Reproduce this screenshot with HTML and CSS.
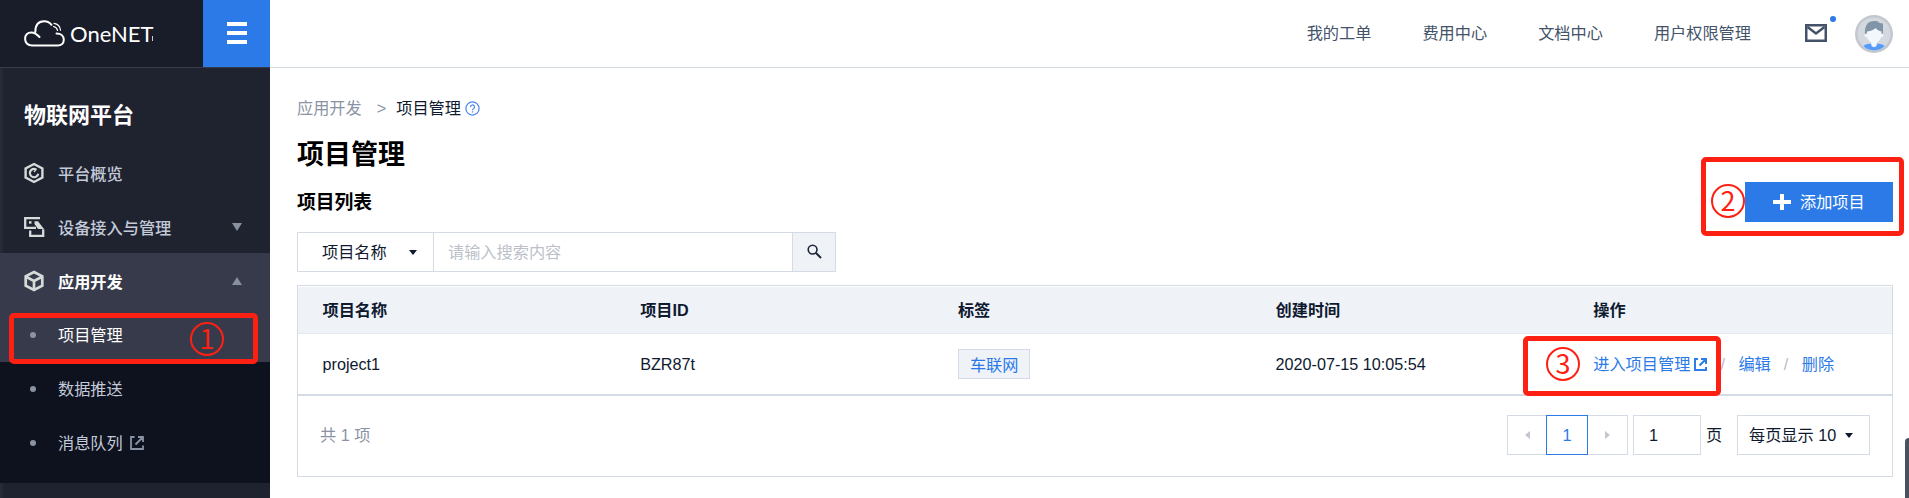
FILE: index.html
```html
<!DOCTYPE html>
<html lang="zh-CN">
<head>
<meta charset="utf-8">
<title>OneNET 项目管理</title>
<link rel="stylesheet" href="styles.css">
</head>
<body>
<header class="topbar">
  <div class="brand">
    <svg class="brand-cloud" width="42" height="28" viewBox="0 0 42 28" fill="none" stroke="#fff" stroke-width="2" stroke-linecap="round" stroke-linejoin="round">
      <path d="M32.500 13.500c4.500 0 7.300 2.600 7.300 6.200S37.200 25.400 33.800 25.400H8c-4 0-6.900-2.500-6.900-6.500 0-4.200 2.900-6.500 6.100-6.500 3.300 0 5.600 1.600 8.300 4.600"/>
      <path d="M11.300 12C11.300 5.500 14.500 1.500 20 1.300c3.300-.1 5.500 1 7.500 3.500"/>
      <path d="M30 3.300c3.600.5 6.100 3.200 6.500 6.900M29.500 6.500c2.200.4 3.600 1.800 4 4" stroke-width="1.200"/>
    </svg>
    <span class="brand-name">OneNET</span><span class="brand-tick"></span>
  </div>
  <button class="toggle"><i></i><i></i><i></i></button>
  <nav class="topnav">
    <a>我的工单</a><a>费用中心</a><a>文档中心</a><a>用户权限管理</a>
  </nav>
  <div class="mail">
    <svg width="22" height="18" viewBox="0 0 22 18"><rect x="1.250" y="1.250" width="19.500" height="15.500" fill="#fff" stroke="#44536a" stroke-width="2.500"/><path d="M2.500 3l8.500 6.500L19.500 3" fill="none" stroke="#44536a" stroke-width="2.500"/></svg>
    <span class="dot"></span>
  </div>
  <svg class="avatar" width="38" height="38" viewBox="0 0 38 38">
    <circle cx="19" cy="19" r="19" fill="#c3c8d0"/><circle cx="19" cy="19" r="16.500" fill="#d3d9df"/>
    <path d="M8.500 31c2-1.800 4.500-2.200 7.500-2.200h6c3 0 5.500.4 7.500 2.200-2.600 2.900-6.300 4.400-10.500 4.400S11.100 33.900 8.500 31z" fill="#559bfa"/>
    <path d="M10 21c-.5-9 1-15 10-15 2 0 3.500.5 4.500 2L28 8.500V21z" fill="#8195a8"/>
    <path d="M12 16.500c4-.3 7-1.700 8.500-3.500 1.500 2 3.500 3 6 3.500V19c1.200-.6 2.300 0 2.100 1.300-.2 1.300-1.300 2.200-2.600 2-.8 2.500-2.200 4-3.800 5L21.500 31c-1.300 1.500-3.700 1.500-5 0L16 27.300c-1.800-1-3.200-2.500-4-5-1.300.2-2.400-.7-2.600-2C9.200 19 10.500 18.400 11.700 19z" fill="#f3f6fa"/>
  </svg>
</header>
<div class="body">
  <aside class="sidebar">
    <h2 class="side-title">物联网平台</h2>
    <a class="item semi">
      <svg width="20" height="22" viewBox="0 0 20 22" fill="none" stroke="#d5dbd9" stroke-width="2.400"><path d="M10 2l8.400 4.500v9L10 20l-8.400-4.500v-9z"/><path d="M12 7.300a4.200 4.200 0 1 0 2.200 4.500" stroke-width="2.200"/><path d="M10 10l2.500-3" stroke-width="1.200"/></svg>
      <span>平台概览</span></a>
    <a class="item semi">
      <svg width="21" height="22" viewBox="0 0 21 22" fill="none" stroke="#d5dbd9" stroke-width="2.300"><path d="M16 2.200H1.200v9.600H12"/><path d="M6.200 14.500v5.300h13v-6.500"/><path d="M5 5.200h2.500v2.500H5z" fill="#d5dbd9" stroke="none"/><path d="M10.500 5.200H14l6 7.800h-6l-3.500-5z" fill="#d5dbd9" stroke="none"/></svg>
      <span class="near">设备接入与管理</span><b class="tri down"></b></a>
    <a class="item open">
      <svg width="20" height="22" viewBox="0 0 20 22" fill="none" stroke="#d5dbd9" stroke-width="2.700"><path d="M10 2l8.300 4.300v9.400L10 20l-8.300-4.300V6.300z"/><path d="M2 6.800l8 4.200 8-4.200M10 11v8.500"/></svg>
      <span>应用开发</span><b class="tri up"></b></a>
    <div class="submenu">
      <a class="item sub active"><i></i><span>项目管理</span></a>
      <a class="item sub"><i></i><span>数据推送</span></a>
      <a class="item sub"><i></i><span>消息队列</span>
        <svg class="ext" width="14" height="14" viewBox="0 0 14 14" fill="none" stroke="#8a93a3" stroke-width="1.800"><path d="M4.500 1H1v12h12V9.500M8 1h5v5M12.500 1.500L5.500 8.500"/></svg></a>
    </div>
  </aside>
  <main class="main">
    <div class="crumbs"><span class="muted">应用开发</span><span class="sep">&gt;</span><span>项目管理</span>
      <svg width="15" height="15" viewBox="0 0 15 15" fill="none" stroke="#4a83ee" stroke-width="1.200"><circle cx="7.500" cy="7.500" r="6.600"/><path d="M5.500 6a2 2 0 1 1 3 1.700c-.7.400-1 .7-1 1.500M7.500 10.300v1.300"/></svg>
    </div>
    <h1>项目管理</h1>
    <div class="list-head"><h3>项目列表</h3>
      <button class="add"><svg width="18" height="16" viewBox="0 0 18 16"><path d="M9 0v16M0 8h18" stroke="#fff" stroke-width="4"/></svg><span>添加项目</span></button></div>
    <div class="search">
      <div class="field"><span>项目名称</span><b class="caret"></b></div>
      <div class="query">请输入搜索内容</div>
      <button class="go"><svg width="15" height="15" viewBox="0 0 15 15" fill="none" stroke="#1a2438"><circle cx="5.600" cy="5.600" r="4.400" stroke-width="1.600"/><path d="M9 9l5 5" stroke-width="2"/></svg></button>
    </div>
    <section class="table">
      <div class="row head"><span>项目名称</span><span>项目ID</span><span>标签</span><span>创建时间</span><span>操作</span></div>
      <div class="row data"><span>project1</span><span>BZR87t</span><span><em class="tag">车联网</em></span><span>2020-07-15 10:05:54</span>
        <span class="ops"><a>进入项目管理</a><svg width="13" height="13" viewBox="0 0 13 13" fill="none" stroke="#2b7de9" stroke-width="2"><path d="M4 1H1v11h11V9M7 1h5v5M11.500 1.500L5.500 7.500"/></svg><i>/</i><a>编辑</a><i>/</i><a>删除</a></span></div>
      <div class="foot">
        <span class="total">共 1 项</span>
        <div class="pages"><span class="pg prev"><b></b></span><span class="pg cur">1</span><span class="pg next"><b></b></span></div>
        <div class="jump">1</div><span class="unit">页</span>
        <div class="size"><span>每页显示 10</span><b class="caret"></b></div>
      </div>
    </section>
  </main>
</div>
<div class="mark mark1"></div><div class="num num1">1</div>
<div class="mark mark2"></div><div class="num num2">2</div>
<div class="mark mark3"></div><div class="num num3">3</div>
<div class="drawer"></div>
</body>
</html>
```
FILE: styles.css
```css
* { box-sizing: border-box; }
body { margin: 0; height: 498px; overflow: hidden; position: relative; background: #fff; color: #0f1a30; font: 16.200px/24px "Liberation Sans", "Noto Sans CJK SC", sans-serif; }
h1, h2, h3 { margin: 0; font-weight: 700; }
i, em { font-style: normal; }
button { border: 0; padding: 0; font: inherit; }
a, span { white-space: nowrap; }
svg { flex: none; display: block; }

.topbar { display: flex; height: 68px; border-bottom: 1px solid #d5dde3; }
.brand { width: 203px; height: 68px; flex: none; background: #191c29; border-bottom: 1px solid #363a49; display: flex; padding-left: 24px; }
.brand-cloud { margin-top: 20px; }
.brand-name { margin-left: 4px; margin-top: 18px; width: 82px; font: 400 22px/32px Lato, "Open Sans", sans-serif; color: #fff; }
.brand-tick { width: 1px; height: 5px; margin-top: 36px; background: #ccd; }
.toggle { width: 67px; height: 67px; flex: none; background: #2b7ae8; display: flex; flex-direction: column; align-items: center; gap: 5px; padding-top: 22px; }
.toggle i { width: 20px; height: 4px; background: #fff; }
.topnav { margin-left: auto; display: flex; gap: 51px; padding-top: 21px; color: #44536a; }
.mail { position: relative; margin: 24px 0 0 54px; height: 18px; }
.dot { position: absolute; left: 25px; top: -8px; width: 6px; height: 6px; border-radius: 50%; background: #2b7ae8; }
.avatar { margin: 15px 16px 0 28px; }

.body { display: flex; height: 430px; }
.sidebar { width: 270px; flex: none; margin-top: -1px; border-top: 1px solid #363a49; height: 431px; background: linear-gradient(90deg, #292c39, #1f222f 4px); color: #c3cad9; }
.side-title { color: #fff; font-size: 22px; line-height: 32px; padding: 32px 0 0 24px; height: 78px; }
.item { display: flex; align-items: center; height: 54px; padding-left: 24px; }
.item span { margin-left: 14px; padding-top: 2px; }
.item .near { margin-left: 13px; }
.semi { font-weight: 500; }
.open { background: #373a4a; color: #fff; font-weight: 700; margin-top: -1px; height: 55px; }
.tri { margin-left: auto; margin-right: 28px; border: 5.500px solid transparent; }
.tri.down { border-top: 8px solid #87909f; border-bottom: 0; }
.tri.up { border-bottom: 8px solid #87909f; border-top: 0; }
.submenu { background: #0e111e; height: 175px; }
.sub i { width: 6px; height: 6px; margin-left: 6px; border-radius: 50%; background: #8a93a3; }
.sub span { margin-left: 22px; padding-top: 0; }
.active { background: #373a4a; color: #fff; }
.ext { margin-left: 7px; }

.main { flex: 1; padding: 28px 16px 0 27px; }
.crumbs { display: flex; align-items: center; height: 24px; }
.crumbs svg { margin-left: 4px; }
.muted, .sep { color: #8a93a3; }
.sep { margin: 0 10px 0 15px; }
h1 { font-size: 27px; line-height: 40px; margin-top: 15px; color: #000; }
.list-head { display: flex; justify-content: space-between; height: 59px; margin-top: 7px; }
h3 { font-size: 18.800px; line-height: 41px; color: #000; }
.add { width: 148px; height: 40px; background: #2b7ae8; color: #fff; display: flex; align-items: center; padding-left: 28px; gap: 9px; }
.search { display: flex; width: 539px; height: 40px; margin-top: -9px; border: 1px solid #d5dbe4; }
.field { width: 136px; border-right: 1px solid #d5dbe4; display: flex; align-items: center; justify-content: space-between; padding: 0 16px 0 24px; }
.caret { border: 4.500px solid transparent; border-top: 5px solid #0f1a30; border-bottom: 0; }
.query { flex: 1; padding-left: 14px; line-height: 39px; color: #bcc1c9; }
.go { width: 43px; background: #eff3f8; border-left: 1px solid #d5dbe4; display: flex; justify-content: center; padding-top: 11px; }

.table { border: 1px solid #d5dbe4; height: 192px; margin-top: 13px; padding-top: 1px; }
.row { display: grid; grid-template-columns: repeat(4, 317.700px) 1fr; padding-left: 24.500px; align-items: center; }
.head { height: 47px; background: #eff3f8; border-bottom: 1px solid #e5e9ee; font-weight: 700; }
.data { height: 62px; border-bottom: 2px solid #d5dbe4; }
.tag { display: inline-block; width: 72px; height: 30px; line-height: 30px; padding-left: 11px; border: 1px solid #d5dbe4; background: #eff3f8; color: #2b7ae8; vertical-align: middle; }
.ops { display: flex; align-items: center; color: #2b7ae8; }
.ops svg { margin-left: 4px; }
.ops i { color: #b7bcc5; width: 5px; margin: 0 13px; }
.foot { display: flex; padding: 19px 22px 0 22px; line-height: 40px; }
.total { color: #8a93a3; margin-right: auto; }
.pages { display: flex; }
.pg { width: 41px; height: 40px; border: 1px solid #d5dbe4; display: flex; justify-content: center; align-items: center; }
.pg b { border: 4px solid transparent; }
.prev b { border-right: 5px solid #c3c7cd; border-left: 0; }
.next b { border-left: 5px solid #c3c7cd; border-right: 0; }
.prev { border-right: 0; width: 39px; }
.next { border-left: 0; width: 40px; }
.cur { width: 42px; border-color: #2b7ae8; color: #2b7ae8; }
.jump { width: 68px; height: 40px; border: 1px solid #d5dbe4; margin-left: 5px; padding-left: 15px; line-height: 38px; }
.unit { margin: 0 15px 0 5px; width: 16px; }
.size { width: 133px; height: 40px; border: 1px solid #d5dbe4; display: flex; align-items: center; justify-content: space-between; padding: 0 16px 0 11px; }

/* annotation overlay */
.mark { position: absolute; border: 5px solid #ff2014; border-radius: 5px; }
.mark1 { left: 9px; top: 313px; width: 249px; height: 51px; }
.mark2 { left: 1701px; top: 157px; width: 203px; height: 79px; }
.mark3 { left: 1523px; top: 336px; width: 198px; height: 60px; }
.num { position: absolute; width: 34px; height: 34px; border: 2px solid #ff2014; border-radius: 50%; color: #ff2014; font: 27px/28px "Noto Sans CJK SC", sans-serif; text-align: center; }
.num1 { left: 190px; top: 322px; }
.num2 { left: 1711px; top: 184px; }
.num3 { left: 1546px; top: 347px; }
.drawer { position: absolute; left: 1905px; top: 438px; width: 8px; height: 64px; background: #4b505f; border-radius: 4px 0 0 0; }
```
